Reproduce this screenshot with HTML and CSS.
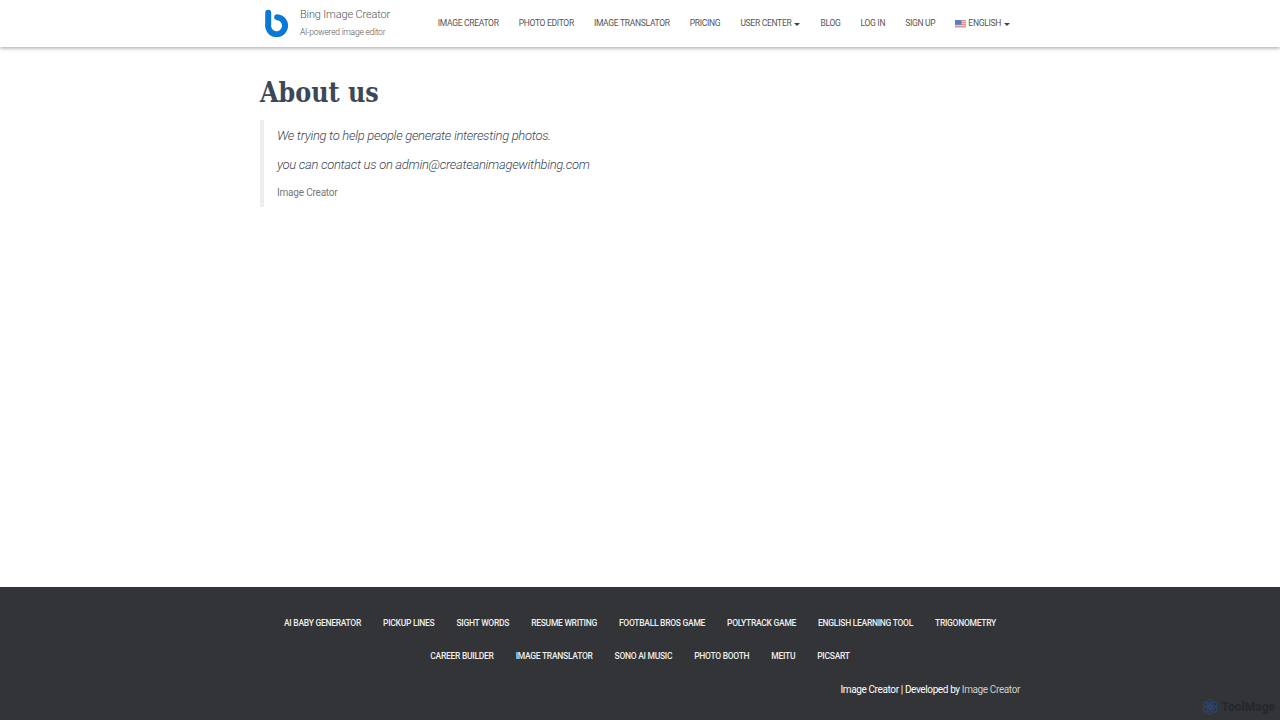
FILE: index.html
```html
<!DOCTYPE html>
<html lang="en">
<head>
    <meta charset="UTF-8">
    <meta name="viewport" content="width=device-width, initial-scale=1.0">
    <title>About us - Bing Image Creator</title>
    <link rel="stylesheet" href="styles.css">
</head>
<body>
    <header class="navbar">
        <div class="container navbar-inner">
            <a class="brand" href="#">
                <svg class="brand-logo" width="24" height="28" viewBox="0 0 24 28">
                    <path d="M3.2 3.8V15.3A8.5 8.5 0 1 0 12.2 8.2" fill="none" stroke="#0a78d4" stroke-width="6" stroke-linecap="round"/>
                </svg>
                <span class="brand-text">
                    <span class="brand-title">Bing Image Creator</span>
                    <span class="brand-tagline">AI-powered image editor</span>
                </span>
            </a>
            <nav class="main-menu">
                <a href="#">Image Creator</a>
                <a href="#">Photo Editor</a>
                <a href="#">Image Translator</a>
                <a href="#">Pricing</a>
                <a href="#">User Center<span class="caret"></span></a>
                <a href="#">Blog</a>
                <a href="#">Log in</a>
                <a href="#">Sign up</a>
                <a href="#">
                    <svg class="flag" width="11" height="8" viewBox="0 0 11 8">
                        <rect width="11" height="8" fill="#efc8c8"/>
                        <path d="M0 .5h11M0 2.5h11M0 4.5h11M0 6.5h11" stroke="#dd8c88" stroke-width=".9"/>
                        <rect width="6.5" height="4.8" fill="#587fc6"/>
                    </svg>English<span class="caret"></span>
                </a>
            </nav>
        </div>
    </header>

    <main class="container content">
        <h1>About us</h1>
        <blockquote>
            <p>We trying to help people generate interesting photos.</p>
            <p>you can contact us on admin@createanimagewithbing.com</p>
            <cite>Image Creator</cite>
        </blockquote>
    </main>

    <footer class="footer">
        <div class="container">
            <nav class="footer-menu">
                <a href="#">AI Baby Generator</a>
                <a href="#">Pickup Lines</a>
                <a href="#">Sight Words</a>
                <a href="#">Resume Writing</a>
                <a href="#">Football Bros Game</a>
                <a href="#">Polytrack Game</a>
                <a href="#">English Learning Tool</a>
                <a href="#">Trigonometry</a>
                <a href="#">Career Builder</a>
                <a href="#">Image Translator</a>
                <a href="#">Sono AI Music</a>
                <a href="#">Photo Booth</a>
                <a href="#">Meitu</a>
                <a href="#">Picsart</a>
            </nav>
            <div class="copyright">Image Creator | Developed by <a href="#">Image Creator</a></div>
        </div>
    </footer>

    <div class="watermark">
        <svg width="16" height="16" viewBox="0 0 16 16" fill="none" stroke="#2b4678" stroke-width="1">
            <ellipse cx="8" cy="5" rx="3" ry="4.3"/>
            <ellipse cx="8" cy="5" rx="3" ry="4.3" transform="rotate(60 8 8)"/>
            <ellipse cx="8" cy="5" rx="3" ry="4.3" transform="rotate(120 8 8)"/>
            <ellipse cx="8" cy="5" rx="3" ry="4.3" transform="rotate(180 8 8)"/>
            <ellipse cx="8" cy="5" rx="3" ry="4.3" transform="rotate(240 8 8)"/>
            <ellipse cx="8" cy="5" rx="3" ry="4.3" transform="rotate(300 8 8)"/>
        </svg>
        <span>ToolMage</span>
    </div>
</body>
</html>
```
FILE: styles.css
```css
* {
    box-sizing: border-box;
}

body {
    margin: 0;
    min-height: 100vh;
    display: flex;
    flex-direction: column;
    font-family: Roboto, "Liberation Sans", sans-serif;
    color: #3c4858;
    background: #fff;
}

a {
    color: inherit;
    text-decoration: none;
}

.container {
    width: 760px;
    margin: 0 auto;
}

/* Header */
.navbar {
    height: 46.5px;
    background: #fff;
    box-shadow: 0 1px 4px rgba(0, 0, 0, 0.38);
}

.navbar-inner {
    height: 46px;
    display: flex;
    align-items: center;
    justify-content: space-between;
}

.brand {
    display: flex;
    align-items: center;
    padding-left: 5px;
    gap: 11px;
    color: #555;
    font-weight: 300;
}

.brand-text {
    display: flex;
    flex-direction: column;
    padding-top: 1px;
}

.brand-title {
    font-size: 11px;
    line-height: 18px;
    letter-spacing: -0.15px;
}

.brand-tagline {
    font-size: 8.5px;
    line-height: 17px;
    letter-spacing: -0.24px;
}

.main-menu {
    display: flex;
    gap: 20px;
    padding-right: 10px;
    font-size: 8.5px;
    line-height: 16px;
    letter-spacing: -0.29px;
    text-transform: uppercase;
    color: #555;
}

.main-menu a {
    display: flex;
    align-items: center;
    white-space: nowrap;
}

.caret {
    margin-left: 3px;
    margin-top: 2px;
    border-top: 3px solid #444;
    border-left: 3px solid transparent;
    border-right: 3px solid transparent;
}

.flag {
    margin-right: 2px;
    margin-top: 1px;
}

/* Page */
.content {
    flex: 1;
    padding-top: 25.5px;
}

h1 {
    margin: 0 0 7px;
    font-family: "Roboto Slab", "DejaVu Serif", serif;
    font-size: 27px;
    line-height: 41px;
    font-weight: 700;
    transform: scaleX(0.885);
    transform-origin: left;
}

blockquote {
    margin: 0;
    height: 87px;
    padding: 6px 13px 0;
    border-left: 4px solid #eee;
}

blockquote p {
    margin: 0 0 10px;
    font-size: 13px;
    line-height: 19px;
    letter-spacing: -0.3px;
    font-style: italic;
    font-weight: 300;
}

blockquote cite {
    display: block;
    padding-top: 1px;
    font-size: 10px;
    line-height: 16px;
    letter-spacing: -0.2px;
    font-style: normal;
    color: #777;
}

/* Footer */
.footer {
    height: 133px;
    padding-top: 20px;
    background: #323437;
    color: #fff;
}

.footer-menu {
    display: flex;
    flex-wrap: wrap;
    justify-content: center;
    column-gap: 22px;
    font-size: 8.5px;
    line-height: 33px;
    letter-spacing: -0.28px;
    font-weight: 500;
    text-transform: uppercase;
    color: #eee;
}

.copyright {
    font-size: 10px;
    line-height: 33px;
    letter-spacing: -0.38px;
    text-align: right;
}

.copyright a {
    color: #ccc;
}

.watermark {
    position: absolute;
    right: 5px;
    bottom: 5px;
    display: flex;
    align-items: center;
    gap: 4px;
    font-size: 12px;
    font-weight: 700;
    color: #24272d;
}
```
